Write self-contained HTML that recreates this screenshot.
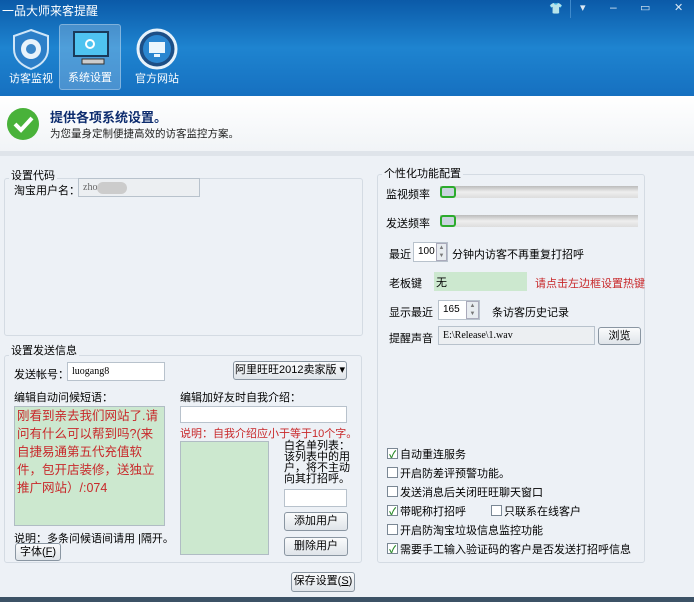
<!DOCTYPE html>
<html><head><meta charset="utf-8"><style>
*{margin:0;padding:0;box-sizing:border-box}
body{width:694px;height:602px;overflow:hidden;font-family:"Liberation Sans","Noto Sans CJK SC",sans-serif;font-size:11px;color:#000;background:#edf1f6;position:relative;white-space:nowrap}
.a{position:absolute}
.hdr{left:0;top:0;width:694px;height:96px;background:linear-gradient(180deg,#0b5aa8 0%,#1e84d0 50%,#1670c0 100%)}
.ttl{left:2px;top:2px;color:#fff;font-size:12px}
.nav{top:24px;width:62px;height:66px;color:#fff;text-align:center;font-size:11px}
.nav span{position:absolute;left:0;right:0;bottom:4px}
.ban{left:0;top:96px;width:694px;height:55px;background:linear-gradient(180deg,#fff,#f1f4f7)}
.sep{left:0;top:151px;width:694px;height:5px;background:#dfe4ea}
.grp{border:1px solid #d4dbe3;border-radius:3px}
.gt{background:#edf1f6;padding:0 2px;font-size:11px}
.inp{background:#fff;border:1px solid #b8c2cc;font-family:"Liberation Serif",serif;font-size:10px;padding:2px 4px;line-height:13px}
.btn{border:1px solid #8a96a2;border-radius:3px;background:linear-gradient(#fafbfc,#dfe4e9);text-align:center;font-size:11px;line-height:17px}
.cb{width:11px;height:11px;border:1px solid #7a8794;background:#fff;display:inline-block;vertical-align:-1px;margin-right:2px;position:relative}
.cb.c::after{content:"✓";position:absolute;left:1px;top:-3px;font-size:10px;color:#2a8a2a;font-weight:bold}
.row{left:386px}
.sl{left:440px;width:198px;height:12px;background:linear-gradient(#bbb,#eee,#ddd)}
.th{width:16px;height:12px;background:#c9d4de;border:2px solid #2cab2c;border-radius:3px}
.red{color:#c8282a}
.sp{width:11px;height:18px;border:1px solid #aab;background:#e8ecf0;font-size:6px;line-height:8px;text-align:center;color:#777}
</style></head><body>
<div class="a hdr"></div>
<div class="a ttl">一品大师来客提醒</div>
<div class="a" style="left:549px;top:2px;color:#fff;font-size:11px">👕</div>
<div class="a" style="left:580px;top:1px;color:#dbe8f4;font-size:11px">▾</div>
<div class="a" style="left:610px;top:0px;color:#dbe8f4;font-size:12px">–</div>
<div class="a" style="left:640px;top:1px;color:#dbe8f4;font-size:11px">▭</div>
<div class="a" style="left:674px;top:1px;color:#dbe8f4;font-size:11px">✕</div>
<div class="a" style="left:570px;top:0;width:1px;height:18px;background:#3f8acc"></div>
<div class="a nav" style="left:0"><svg width="44" height="44" style="margin-top:3px" viewBox="0 0 44 44"><path d="M22 3 L39 9 V22 C39 33 30 39 22 42 C14 39 5 33 5 22 V9Z" fill="#2c7fc8" stroke="#cfe6f8" stroke-width="2"/><circle cx="22" cy="22" r="10" fill="#e8f3fb"/><circle cx="22" cy="22" r="5" fill="#3a86c8"/></svg><span>访客监视</span></div>
<div class="a nav" style="left:59px;background:rgba(255,255,255,.22);border:1px solid rgba(255,255,255,.3);border-radius:3px"><svg width="44" height="40" style="margin-top:4px" viewBox="0 0 44 40"><rect x="6" y="3" width="34" height="24" fill="#4fc3f0" stroke="#1a3a5a" stroke-width="2"/><rect x="14" y="30" width="22" height="5" fill="#ccc" stroke="#333"/><circle cx="22" cy="15" r="4" fill="none" stroke="#fff" stroke-width="2"/></svg><span>系统设置</span></div>
<div class="a nav" style="left:126px"><svg width="44" height="44" style="margin-top:3px" viewBox="0 0 44 44"><circle cx="22" cy="22" r="19" fill="#1d4f86" stroke="#e6f2fb" stroke-width="3"/><circle cx="22" cy="22" r="14" fill="#2a86d0"/><rect x="14" y="15" width="16" height="11" fill="#eaf6fd"/><rect x="19" y="27" width="6" height="3" fill="#eaf6fd"/></svg><span>官方网站</span></div>
<div class="a ban"></div>
<svg class="a" style="left:6px;top:107px" width="34" height="34" viewBox="0 0 34 34"><circle cx="17" cy="17" r="16" fill="#49b23a"/><path d="M9 17 L15 23 L26 11" fill="none" stroke="#fff" stroke-width="4"/></svg>
<div class="a" style="left:50px;top:107px;font-size:13px;font-weight:bold;color:#0d2c6e">提供各项系统设置。</div>
<div class="a" style="left:50px;top:126px;font-size:10.5px;color:#222">为您量身定制便捷高效的访客监控方案。</div>
<div class="a sep"></div>

<div class="a grp" style="left:4px;top:178px;width:359px;height:158px"></div>
<div class="a gt" style="left:9px;top:167px">设置代码</div>
<div class="a" style="left:14px;top:182px">淘宝用户名：</div>
<div class="a inp" style="left:78px;top:178px;width:122px;height:19px;background:#eceff2;color:#666">zho<span style="display:inline-block;width:30px;height:12px;background:#ccc;border-radius:6px;vertical-align:middle"></span></div>

<div class="a grp" style="left:4px;top:355px;width:358px;height:208px"></div>
<div class="a gt" style="left:9px;top:342px">设置发送信息</div>
<div class="a" style="left:14px;top:366px">发送帐号：</div>
<div class="a inp" style="left:67px;top:362px;width:98px;height:19px">luogang8</div>
<div class="a btn" style="left:233px;top:361px;width:114px;height:19px">阿里旺旺2012卖家版 ▾</div>
<div class="a" style="left:14px;top:389px">编辑自动问候短语：</div>
<div class="a red" style="left:14px;top:406px;width:151px;height:120px;background:#cce8cf;border:1px solid #b0bcc4;font-size:12.5px;line-height:18px;padding:0 2px;white-space:normal">刚看到亲去我们网站了.请问有什么可以帮到吗?(来自捷易通第五代充值软件，包开店装修，送独立推广网站）/:074</div>
<div class="a" style="left:14px;top:530px">说明：多条问候语间请用 |隔开。</div>
<div class="a btn" style="left:15px;top:543px;width:46px;height:18px">字体(<u>F</u>)</div>
<div class="a" style="left:180px;top:389px">编辑加好友时自我介绍：</div>
<div class="a inp" style="left:180px;top:406px;width:167px;height:17px"></div>
<div class="a red" style="left:180px;top:425px">说明：自我介绍应小于等于10个字。</div>
<div class="a" style="left:180px;top:441px;width:89px;height:114px;background:#cce8cf;border:1px solid #b0bcc4"></div>
<div class="a" style="left:284px;top:441px;line-height:11px;font-size:11px">白名单列表：<br>该列表中的用<br>户，将不主动<br>向其打招呼。</div>
<div class="a inp" style="left:284px;top:489px;width:63px;height:18px"></div>
<div class="a btn" style="left:284px;top:512px;width:64px;height:19px">添加用户</div>
<div class="a btn" style="left:284px;top:537px;width:64px;height:19px">删除用户</div>
<div class="a btn" style="left:291px;top:572px;width:64px;height:20px">保存设置(<u>S</u>)</div>

<div class="a grp" style="left:377px;top:174px;width:268px;height:389px"></div>
<div class="a gt" style="left:382px;top:165px">个性化功能配置</div>
<div class="a row" style="top:186px">监视频率</div>
<div class="a sl" style="top:186px"></div><div class="a th" style="left:440px;top:186px"></div>
<div class="a row" style="top:215px">发送频率</div>
<div class="a sl" style="top:215px"></div><div class="a th" style="left:440px;top:215px"></div>
<div class="a row" style="left:389px;top:246px">最近</div>
<div class="a inp" style="left:413px;top:242px;width:35px;height:20px;font-family:'Liberation Sans';font-size:10px">100</div>
<div class="a sp" style="left:436px;top:243px"> ▲<br>▼</div>
<div class="a" style="left:452px;top:246px">分钟内访客不再重复打招呼</div>
<div class="a row" style="left:389px;top:275px">老板键</div>
<div class="a" style="left:434px;top:272px;width:93px;height:19px;background:#cce8cf;padding:2px 2px">无</div>
<div class="a red" style="left:535px;top:275px">请点击左边框设置热键</div>
<div class="a row" style="left:389px;top:304px">显示最近</div>
<div class="a inp" style="left:438px;top:300px;width:42px;height:20px;font-family:'Liberation Sans';font-size:10px">165</div>
<div class="a sp" style="left:466px;top:301px;width:13px">▲<br>▼</div>
<div class="a" style="left:492px;top:304px">条访客历史记录</div>
<div class="a row" style="left:389px;top:330px">提醒声音</div>
<div class="a inp" style="left:438px;top:326px;width:157px;height:19px;background:#eceff2">E:\Release\1.wav</div>
<div class="a btn" style="left:598px;top:327px;width:43px;height:18px">浏览</div>

<div class="a" style="left:387px;top:446px"><span class="cb c"></span>自动重连服务</div>
<div class="a" style="left:387px;top:465px"><span class="cb"></span>开启防差评预警功能。</div>
<div class="a" style="left:387px;top:484px"><span class="cb"></span>发送消息后关闭旺旺聊天窗口</div>
<div class="a" style="left:387px;top:503px"><span class="cb c"></span>带昵称打招呼</div>
<div class="a" style="left:491px;top:503px"><span class="cb"></span>只联系在线客户</div>
<div class="a" style="left:387px;top:522px"><span class="cb"></span>开启防淘宝垃圾信息监控功能</div>
<div class="a" style="left:387px;top:541px"><span class="cb c"></span>需要手工输入验证码的客户是否发送打招呼信息</div>
<div class="a" style="left:0;top:597px;width:694px;height:5px;background:#3c5266"></div>
</body></html>
